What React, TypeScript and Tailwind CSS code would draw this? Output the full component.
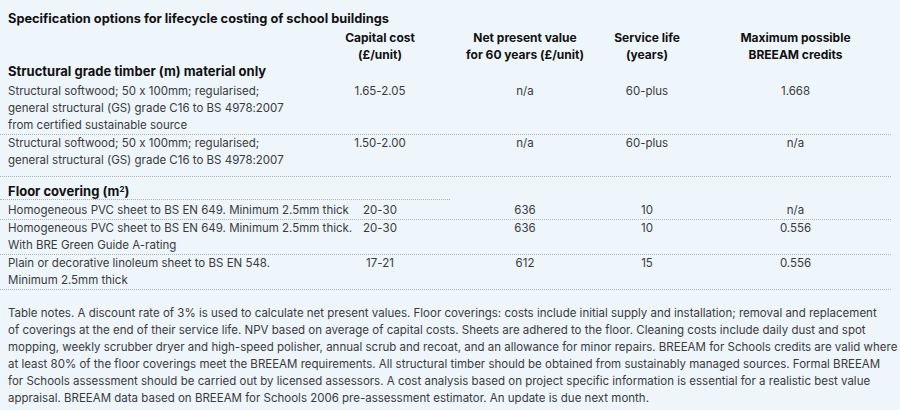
import React from "react";

type Row = {
  desc: string[];
  cap: string;
  npv: string;
  life: string;
  breeam: string;
  pad: string;
};

const timberRows: Row[] = [
  {
    desc: [
      "Structural softwood; 50 x 100mm; regularised;",
      "general structural (GS) grade C16 to BS 4978:2007",
      "from certified sustainable source",
    ],
    cap: "1.65-2.05",
    npv: "n/a",
    life: "60-plus",
    breeam: "1.668",
    pad: "",
  },
  {
    desc: [
      "Structural softwood; 50 x 100mm; regularised;",
      "general structural (GS) grade C16 to BS 4978:2007",
    ],
    cap: "1.50-2.00",
    npv: "n/a",
    life: "60-plus",
    breeam: "n/a",
    pad: "pb-[7px]",
  },
];

const floorRows: Row[] = [
  {
    desc: ["Homogeneous PVC sheet to BS EN 649. Minimum 2.5mm thick"],
    cap: "20-30",
    npv: "636",
    life: "10",
    breeam: "n/a",
    pad: "pt-[2px]",
  },
  {
    desc: [
      "Homogeneous PVC sheet to BS EN 649. Minimum 2.5mm thick.",
      "With BRE Green Guide A-rating",
    ],
    cap: "20-30",
    npv: "636",
    life: "10",
    breeam: "0.556",
    pad: "",
  },
  {
    desc: ["Plain or decorative linoleum sheet to BS EN 548.", "Minimum 2.5mm thick"],
    cap: "17-21",
    npv: "612",
    life: "15",
    breeam: "0.556",
    pad: "",
  },
];

const notes = [
  "Table notes. A discount rate of 3% is used to calculate net present values. Floor coverings: costs include initial supply and installation; removal and replacement",
  "of coverings at the end of their service life. NPV based on average of capital costs. Sheets are adhered to the floor. Cleaning costs include daily dust and spot",
  "mopping, weekly scrubber dryer and high-speed polisher, annual scrub and recoat, and an allowance for minor repairs. BREEAM for Schools credits are valid where",
  "at least 80% of the floor coverings meet the BREEAM requirements. All structural timber should be obtained from sustainably managed sources. Formal BREEAM",
  "for Schools assessment should be carried out by licensed assessors. A cost analysis based on project specific information is essential for a realistic best value",
  "appraisal. BREEAM data based on BREEAM for Schools 2006 pre-assessment estimator. An update is due next month.",
];

const TableRow = ({ row }: { row: Row }) => (
  <div className={`flex border-b border-dotted border-[#aab1b8] text-[11.5px] leading-[17px] text-[#3b3b3b] ${row.pad}`}>
    <div className="w-[340px] pl-2 whitespace-nowrap">
      {row.desc.map((line, i) => (
        <div key={i}>{line}</div>
      ))}
    </div>
    <div className="w-[80px] text-center">{row.cap}</div>
    <div className="ml-[30px] w-[150px] text-center">{row.npv}</div>
    <div className="w-[94px] text-center">{row.life}</div>
    <div className="w-[197px] pl-[6px] text-center">{row.breeam}</div>
  </div>
);

const App = () => {
  return (
    <div
      className="w-[900px] h-[410px] overflow-hidden bg-[#eef5fb] pt-[11px] [font-feature-settings:'calt'_0]"
      style={{ fontFamily: "Inter, 'Liberation Sans', sans-serif" }}
    >
      <div className="w-[891px]">
        <h1 className="pl-2 text-[12.8px] leading-4 font-bold text-[#111]">
          Specification options for lifecycle costing of school buildings
        </h1>

        {/* Column headers */}
        <div className="mt-[2px] flex text-[12px] leading-[17px] font-bold text-[#111] whitespace-nowrap">
          <div className="w-[340px]" />
          <div className="w-[80px] flex flex-col items-center">
            <span>Capital cost</span>
            <span>(£/unit)</span>
          </div>
          <div className="ml-[30px] w-[150px] flex flex-col items-center">
            <span>Net present value</span>
            <span>for 60 years (£/unit)</span>
          </div>
          <div className="w-[94px] flex flex-col items-center">
            <span>Service life</span>
            <span>(years)</span>
          </div>
          <div className="w-[197px] pl-[6px] flex flex-col items-center">
            <span>Maximum possible</span>
            <span>BREEAM credits</span>
          </div>
        </div>

        <h2 className="pl-2 text-[13px] leading-4 font-bold text-[#111]">
          Structural grade timber (m) material only
        </h2>
        <div className="mt-1">
          {timberRows.map((row, i) => (
            <TableRow key={i} row={row} />
          ))}
        </div>

        <h2 className="mt-[6px] w-[450px] border-b border-dotted border-[#aab1b8] pl-2 text-[13px] leading-4 font-bold text-[#111]">
          Floor covering (m<sup className="text-[8px]">2</sup>)
        </h2>
        {floorRows.map((row, i) => (
          <TableRow key={i} row={row} />
        ))}
      </div>

      {/* Notes */}
      <div className="mt-[15px] pl-2 text-[11.5px] leading-[17px] text-[#3b3b3b] whitespace-nowrap">
        {notes.map((line, i) => (
          <div key={i}>{line}</div>
        ))}
      </div>
    </div>
  );
};

export default App;
